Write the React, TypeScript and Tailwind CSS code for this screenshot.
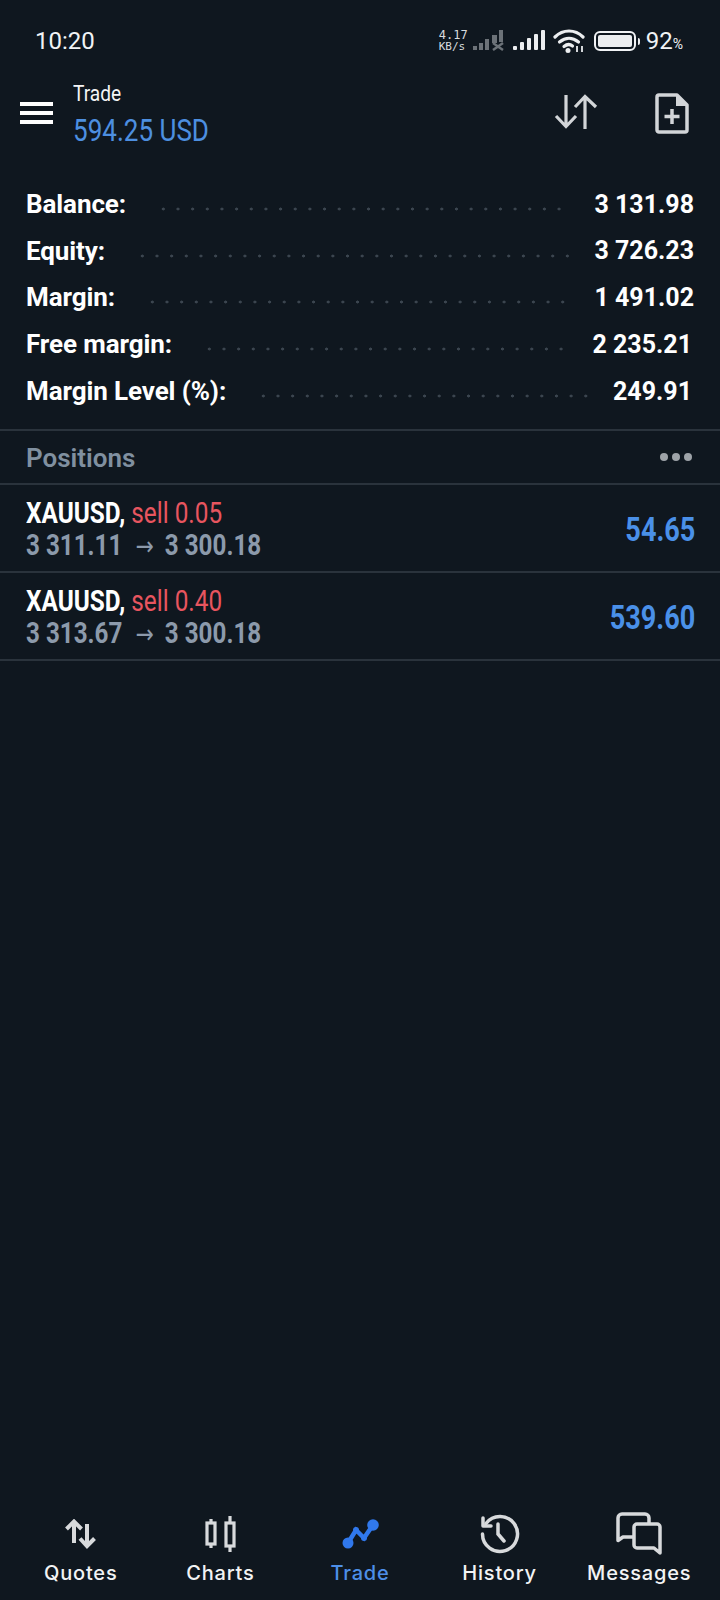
import React from "react";

const rows = [
  { label: "Balance:", value: "3 131.98", end: "mr-[28px]", shift: "" },
  { label: "Equity:", value: "3 726.23", end: "mr-[20px]", shift: "" },
  { label: "Margin:", value: "1 491.02", end: "mr-[25px]", shift: "" },
  { label: "Free margin:", value: "2 235.21", end: "mr-[22px]", shift: "pr-[2px]" },
  { label: "Margin Level (%):", value: "249.91", end: "mr-[22px]", shift: "pr-[2px]" },
];

const positions = [
  { lots: "sell 0.05", from: "3 311.11", to: "3 300.18", profit: "54.65" },
  { lots: "sell 0.40", from: "3 313.67", to: "3 300.18", profit: "539.60" },
];

const StatusBar = () => (
  <div className="h-[72px] flex items-center justify-between pl-[35px] pr-[37px] pt-[10px] text-[#f1f3f5]">
    <p className="text-[24px] font-['Roboto',sans-serif] leading-none">10:20</p>
    <div className="flex items-center">
      <div className="font-['DejaVu_Sans_Mono',monospace] text-[12px] leading-[11px] text-[#d8dbde] w-[28px] mr-[6px]">
        <p>4.17</p>
        <p className="text-[11px]">KB/s</p>
      </div>
      <svg width="32" height="22" viewBox="0 0 32 22" fill="#6c7278" className="mr-[8px]">
        <rect x="0" y="16" width="4" height="4" />
        <rect x="6" y="13" width="4" height="7" />
        <rect x="12" y="9" width="4" height="11" />
        <rect x="19" y="5" width="5" height="8" />
        <rect x="26" y="0" width="4" height="12" />
        <path d="M20 13l10 7M30 13l-10 7" stroke="#6c7278" strokeWidth="2.5" />
      </svg>
      <svg width="32" height="22" viewBox="0 0 32 22" fill="#eceef0" className="mr-[8px]">
        <rect x="0" y="16" width="4" height="4" rx="1" />
        <rect x="7" y="12" width="4" height="8" rx="1" />
        <rect x="14" y="8" width="4" height="12" rx="1" />
        <rect x="21" y="4" width="4" height="16" rx="1" />
        <rect x="28" y="0" width="4" height="20" rx="1" />
      </svg>
      <svg width="32" height="24" viewBox="0 0 32 24" fill="none" stroke="#eceef0" strokeWidth="3.2" strokeLinecap="round" className="mr-[9px]">
        <path d="M2 8c8-8 20-8 28 0" />
        <path d="M6.500 13c6-5 13-5 19 0" />
        <path d="M11 17.500c3-2.500 6-2.500 8.500-.5" />
        <circle cx="15" cy="21.500" r="2.500" fill="#eceef0" stroke="none" />
        <path d="M24 17v6M29 17v6" strokeWidth="2" strokeLinecap="butt" stroke="#d3d6d9" />
      </svg>
      <div className="w-[42px] h-[20px] rounded-[6px] border-2 border-[#f1f3f5] p-[2px]">
        <div className="w-[34px] h-full rounded-[2px] bg-[#eceef0]" />
      </div>
      <div className="w-[2px] h-[7px] bg-[#eceef0] ml-[2px] mr-[6px] rounded-r" />
      <p className="text-[24px] leading-none font-['Roboto',sans-serif]">
        92<span className="text-[14px]">%</span>
      </p>
    </div>
  </div>
);

const Header = () => (
  <header className="h-[82px] flex items-center pl-[20px] pr-[31px]">
    <div className="w-[33px] flex flex-col gap-[5px]">
      <span className="h-[4px] bg-white" />
      <span className="h-[4px] bg-white" />
      <span className="h-[4px] bg-white" />
    </div>
    <div className="ml-[20px] mt-[2px] flex-1 flex flex-col gap-[7px] font-['Roboto',sans-serif]">
      <p className="text-[22px] leading-[26px] text-[#f4f5f6] origin-left scale-x-[0.87]">Trade</p>
      <p className="text-[31px] leading-[34px] text-[#4d8fe0] origin-left scale-x-[0.84]">594.25 USD</p>
    </div>
    <svg width="44" height="36" viewBox="0 0 44 36" fill="none" stroke="#d2d5d8" strokeWidth="3.2" className="mr-[57px] mt-[-2px]">
      <path d="M12 1v32M2 22l10 10.500L22 22" />
      <path d="M31 35V3M21 13L31 2.500 42 13" />
    </svg>
    <svg width="34" height="41" viewBox="0 0 34 41" fill="none">
      <path d="M4 2h18l10 10v25a2 2 0 0 1-2 2H4a2 2 0 0 1-2-2V4a2 2 0 0 1 2-2z" stroke="#d2d5d8" strokeWidth="3.500" strokeLinejoin="round" />
      <path d="M21 2l11 11H21z" fill="#d2d5d8" />
      <path d="M17 16v15M9.500 23.500h15" stroke="#d2d5d8" strokeWidth="3.500" />
    </svg>
  </header>
);

const Summary = () => (
  <section className="pt-[27px] pl-[26px] pr-[26px]">
    {rows.map((row) => (
      <div key={row.label} className="h-[46.8px] flex items-center font-['Roboto',sans-serif] text-white">
        <span className="text-[26px] font-bold tracking-[-0.1px]">{row.label}</span>
        <span className={`flex-1 h-[4px] mt-[9px] ml-[30px] bg-[radial-gradient(circle,#3b454f_1.2px,transparent_1.8px)] bg-[length:14.67px_4px] ${row.end}`} />
        <span className={`text-[25px] font-bold ${row.shift}`}>{row.value}</span>
      </div>
    ))}
  </section>
);

const Positions = () => (
  <section className="mt-[14px]">
    <div className="h-[56px] pt-[3px] border-y-2 border-[#2a333c] flex items-center justify-between pl-[26px] pr-[28px]">
      <p className="text-[26px] font-semibold text-[#8090a0] font-['Roboto',sans-serif]">Positions</p>
      <div className="flex gap-[4px] mb-[2px]">
        <span className="w-[8px] h-[8px] rounded-full bg-[#9ea3a8]" />
        <span className="w-[8px] h-[8px] rounded-full bg-[#9ea3a8]" />
        <span className="w-[8px] h-[8px] rounded-full bg-[#9ea3a8]" />
      </div>
    </div>
    {positions.map((pos) => (
      <div key={pos.from} className="h-[88px] pt-[3px] border-b-2 border-[#2a333c] flex items-center justify-between pl-[26px] pr-[25px] font-['Roboto',sans-serif]">
        <div className="w-[400px]">
          <p className="text-[29px] leading-[32px] origin-left scale-x-[0.84] whitespace-nowrap">
            <span className="font-bold text-white">XAUUSD, </span>
            <span className="text-[#e8555f]">{pos.lots}</span>
          </p>
          <p className="text-[29px] leading-[32px] font-bold text-[#8c9aab] origin-left scale-x-[0.835] whitespace-nowrap">
            {pos.from}
            <span className="font-normal text-[26px] ml-[16px] mr-[13px] font-['DejaVu_Sans',sans-serif]">→</span>
            {pos.to}
          </p>
        </div>
        <p className="text-[33px] font-bold text-[#4a90e8] origin-right scale-x-[0.82]">{pos.profit}</p>
      </div>
    ))}
  </section>
);

const QuotesIcon = () => (
  <svg width="32" height="30" viewBox="0 0 32 30" fill="none" stroke="#d8dadc" strokeWidth="4">
    <path d="M9 24V3M1.500 10L9 2.500 16.500 10" />
    <path d="M22 5v22M15 19.500l7 7.500 7.500-7.500" />
  </svg>
);

const ChartsIcon = () => (
  <svg width="31" height="36" viewBox="0 0 31 36" fill="none" stroke="#d8dadc" strokeWidth="3.200">
    <rect x="2" y="7" width="8" height="21" />
    <path d="M6 3v4M6 28v4" />
    <rect x="21" y="7" width="8" height="23" />
    <path d="M25 0v7M25 30v6" />
  </svg>
);

const TradeIcon = () => (
  <svg width="38" height="32" viewBox="0 0 38 32" fill="#3078ec" stroke="#3078ec">
    <path d="M7 25l8-13 8 8 9-13" fill="none" strokeWidth="4.500" />
    <circle cx="7" cy="25" r="5.500" stroke="none" />
    <circle cx="15" cy="12" r="3" stroke="none" />
    <circle cx="23" cy="20" r="3" stroke="none" />
    <circle cx="32" cy="7" r="5.800" stroke="none" />
  </svg>
);

const HistoryIcon = () => (
  <svg width="40" height="40" viewBox="0 0 40 40" fill="none" stroke="#d8dadc" strokeWidth="3.500" strokeLinecap="round">
    <path d="M6 9.500A17.500 17.500 0 1 1 2.500 20" />
    <path d="M3 4v8h8" fill="none" strokeLinejoin="round" />
    <path d="M18 10v10l6 7" />
  </svg>
);

const MessagesIcon = () => (
  <svg width="46" height="44" viewBox="0 0 46 44" fill="none" stroke="#d8dadc" strokeWidth="3.500" strokeLinejoin="round">
    <path d="M33 12V6a4 4 0 0 0-4-4H6a4 4 0 0 0-4 4v22.500l5-3.500h10" />
    <path d="M21 12h20a3 3 0 0 1 3 3v26l-6-5H21a3 3 0 0 1-3-3V15a3 3 0 0 1 3-3z" />
  </svg>
);

const tabs = [
  { label: "Quotes", icon: <QuotesIcon /> },
  { label: "Charts", icon: <ChartsIcon /> },
  { label: "Trade", icon: <TradeIcon />, active: true },
  { label: "History", icon: <HistoryIcon /> },
  { label: "Messages", icon: <MessagesIcon /> },
];

const BottomNav = () => (
  <nav className="h-[92px] px-[11px] grid grid-cols-5">
    {tabs.map((tab) => (
      <div key={tab.label} className="flex flex-col items-center">
        <div className="h-[52px] flex items-center justify-center">{tab.icon}</div>
        <p className={`text-[20px] leading-[26px] tracking-[0.8px] font-['Inter',sans-serif] font-medium ${tab.active ? "text-[#4d8fe8]" : "text-[#f2f3f4]"}`}>
          {tab.label}
        </p>
      </div>
    ))}
  </nav>
);

const App = () => (
  <div className="w-[720px] h-[1600px] bg-[#0f171f] flex flex-col overflow-hidden">
    <StatusBar />
    <Header />
    <Summary />
    <Positions />
    <div className="flex-1" />
    <BottomNav />
  </div>
);

export default App;
